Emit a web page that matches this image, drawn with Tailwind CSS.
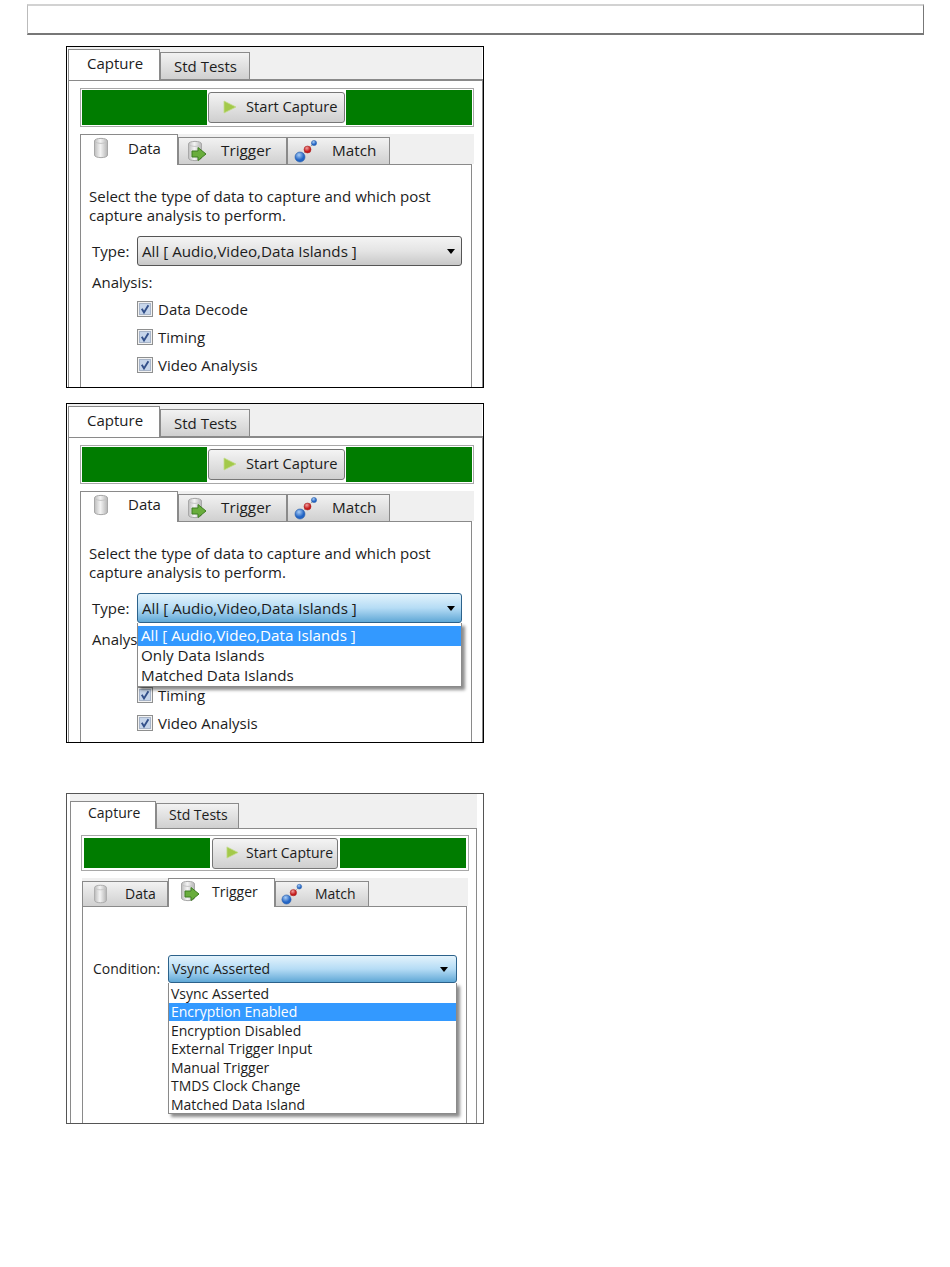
<!DOCTYPE html>
<html lang="en">
<head>
  <meta charset="UTF-8">
  <title>Capture settings</title>
  <script src="https://cdn.jsdelivr.net/npm/@tailwindcss/browser@4"></script>
</head>
<body class="bg-white text-[#1c1c1c] font-['Open_Sans',sans-serif] text-[14px] leading-[19px]">

  <!-- icon set, reused in all three panels -->
  <svg class="absolute w-0 h-0">
    <defs>
      <linearGradient id="can" x1="0" x2="1" y1="0" y2="0">
        <stop offset="0" stop-color="#bdbdbd"/><stop offset="0.45" stop-color="#f4f4f4"/><stop offset="1" stop-color="#b5b5b5"/>
      </linearGradient>
      <radialGradient id="blueball" cx="0.4" cy="0.3"><stop offset="0" stop-color="#a9cdf5"/><stop offset="1" stop-color="#2264c4"/></radialGradient>
      <radialGradient id="redball" cx="0.4" cy="0.3"><stop offset="0" stop-color="#f2a0a0"/><stop offset="1" stop-color="#c41c1c"/></radialGradient>
    </defs>
    <symbol id="i-play" viewBox="0 0 14 14"><path d="M1 1 L13 7 L1 13 Z" fill="#a3c94a" stroke="#c3dc8c" stroke-width="0.8"/></symbol>
    <symbol id="i-data" viewBox="0 0 16 22">
      <path d="M1.5 4 C1.5 0.5 14.5 0.5 14.5 4 V18 C14.5 21.5 1.5 21.5 1.5 18 Z" fill="url(#can)" stroke="#a8a8a8"/>
      <path d="M2 4.5 C4 7 12 7 14 4.5" fill="none" stroke="#c4c4c4"/>
    </symbol>
    <symbol id="i-trigger" viewBox="0 0 20 22">
      <path d="M1.5 4 C1.5 0.5 14.5 0.5 14.5 4 V18 C14.5 21.5 1.5 21.5 1.5 18 Z" fill="url(#can)" stroke="#a8a8a8"/>
      <path d="M2 4.5 C4 7 12 7 14 4.5" fill="none" stroke="#c4c4c4"/>
      <path d="M5 11 H11 V7.5 L19 14 L11 20.5 V17 H5 Z" fill="#69ad3c" stroke="#3f7d22" stroke-width="1"/>
    </symbol>
    <symbol id="i-match" viewBox="0 0 24 24">
      <path d="M6 18 L20 4" stroke="#9a9a9a" stroke-width="1" stroke-dasharray="2 1"/>
      <circle cx="6" cy="18" r="5" fill="url(#blueball)" stroke="#2a5ea8" stroke-width="0.6"/>
      <circle cx="13.5" cy="10.5" r="3.5" fill="url(#redball)" stroke="#a01818" stroke-width="0.5"/>
      <circle cx="20" cy="4" r="2.6" fill="url(#blueball)" stroke="#2a5ea8" stroke-width="0.5"/>
    </symbol>
    <symbol id="i-check" viewBox="0 0 16 16">
      <rect x="0.5" y="0.5" width="15" height="15" fill="#f2f2f2" stroke="#8e8f8f"/>
      <rect x="2.5" y="2.5" width="11" height="11" fill="#c6d5ea" stroke="#a7b4c8"/>
      <path d="M4.8 7.8 L7 11.4 L11.4 4.2" fill="none" stroke="#33508a" stroke-width="1.9"/>
    </symbol>
  </svg>

  <!-- top bar -->
  <div class="h-[4px]"></div>
  <div class="ml-[27px] w-[897px] h-[31px] border-t-2 border-t-[#d2d2d2] border-l border-l-[#bbbbbb] border-r border-r-[#777777] border-b-2 border-b-[#777777]"></div>
  <div class="h-[11px]"></div>

  <!-- Panel 1: data tab -->
  <section class="ml-[66px] w-[418px] h-[342px] border border-black overflow-hidden">
    <div class="flex h-[32px] items-end bg-[#f0f0f0] mx-[1px]">
      <div class="relative z-10 -mb-px w-[92px] h-[31px] bg-white border border-b-0 border-[#8a8a8a] pl-[18px] pt-[4px] text-[15px]">Capture</div>
      <div class="w-[90px] h-[27px] bg-gradient-to-b from-[#f2f2f2] to-[#d0d0d0] border border-b-0 border-[#8a8a8a] pl-[13px] pt-[4px] text-[15px]">Std Tests</div>
    </div>
    <div class="ml-[1px] h-full border-t-2 border-l border-r border-[#8a8a8a] pl-[11px]">
      <div class="mt-[7px] w-[394px] h-[39px] border border-[#a8a8a8] p-[1px] flex gap-[1px]">
        <div class="w-[125px] bg-[#007c00]"></div>
        <button class="w-[137px] mt-[2px] h-[31px] rounded-[3px] border border-[#777777] bg-gradient-to-b from-[#f4f4f4] to-[#cfcfcf] flex items-center pl-[14px] pb-[2px] gap-[9px] text-[14.7px]">
          <svg class="w-[14px] h-[14px]"><use href="#i-play"/></svg>Start Capture
        </button>
        <div class="flex-1 bg-[#007c00]"></div>
      </div>
      <div class="mt-[7px] w-[394px] h-[30px] bg-[#f0f0f0] flex items-end">
        <div class="relative z-10 -mb-px w-[98px] h-[31px] bg-white border border-b-0 border-[#8a8a8a] flex gap-[19px] pl-[12px] text-[15px]">
          <svg class="w-[16px] h-[22px] mt-[2px]"><use href="#i-data"/></svg><span class="pt-[4px]">Data</span>
        </div>
        <div class="w-[109px] h-[27px] bg-gradient-to-b from-[#f2f2f2] to-[#d0d0d0] border border-b-0 border-[#8a8a8a] flex gap-[14px] pl-[8px] text-[15.3px]">
          <svg class="w-[20px] h-[22px] mt-[2px]"><use href="#i-trigger"/></svg><span class="pt-[3px]">Trigger</span>
        </div>
        <div class="w-[103px] h-[27px] bg-gradient-to-b from-[#f2f2f2] to-[#d0d0d0] border border-b-0 border-[#8a8a8a] flex gap-[14px] pl-[6px] text-[15.3px]">
          <svg class="w-[24px] h-[24px] mt-[1px]"><use href="#i-match"/></svg><span class="pt-[3px]">Match</span>
        </div>
      </div>
      <div class="w-[392px] h-[240px] border border-[#8a8a8a] pl-[8px] pt-[22px] text-[15px]">
        <p class="w-[375px]">Select the type of data to capture and which post capture analysis to perform.</p>
        <div class="flex items-center mt-[11px] ml-[3px]">
          <span class="w-[45px]">Type:</span>
          <div class="w-[325px] h-[30px] rounded-[3px] border border-[#555555] bg-gradient-to-b from-[#f4f4f4] via-[#e4e4e4] to-[#c8c8c8] flex items-center justify-between pl-[4px] pr-[6px] text-[15.2px]">
            All [ Audio,Video,Data Islands ]
            <span class="w-0 h-0 border-x-[4px] border-x-transparent border-t-[5px] border-t-black"></span>
          </div>
        </div>
        <p class="ml-[3px] mt-[7px]">Analysis:</p>
        <div class="ml-[48px] mt-[9px] flex flex-col gap-[12px]">
          <label class="flex items-center gap-[5px] h-[16px]"><svg class="w-[16px] h-[16px]"><use href="#i-check"/></svg>Data Decode</label>
          <label class="flex items-center gap-[5px] h-[16px]"><svg class="w-[16px] h-[16px]"><use href="#i-check"/></svg>Timing</label>
          <label class="flex items-center gap-[5px] h-[16px]"><svg class="w-[16px] h-[16px]"><use href="#i-check"/></svg>Video Analysis</label>
        </div>
      </div>
    </div>
  </section>

  <div class="h-[15px]"></div>

  <!-- Panel 2: type dropdown open -->
  <section class="ml-[66px] w-[418px] h-[340px] border border-black overflow-hidden">
    <div class="flex h-[32px] items-end bg-[#f0f0f0] mx-[1px]">
      <div class="relative z-10 -mb-px w-[92px] h-[31px] bg-white border border-b-0 border-[#8a8a8a] pl-[18px] pt-[4px] text-[15px]">Capture</div>
      <div class="w-[90px] h-[27px] bg-gradient-to-b from-[#f2f2f2] to-[#d0d0d0] border border-b-0 border-[#8a8a8a] pl-[13px] pt-[4px] text-[15px]">Std Tests</div>
    </div>
    <div class="ml-[1px] h-full border-t-2 border-l border-r border-[#8a8a8a] pl-[11px]">
      <div class="mt-[7px] w-[394px] h-[39px] border border-[#a8a8a8] p-[1px] flex gap-[1px]">
        <div class="w-[125px] bg-[#007c00]"></div>
        <button class="w-[137px] mt-[2px] h-[31px] rounded-[3px] border border-[#777777] bg-gradient-to-b from-[#f4f4f4] to-[#cfcfcf] flex items-center pl-[14px] pb-[2px] gap-[9px] text-[14.7px]">
          <svg class="w-[14px] h-[14px]"><use href="#i-play"/></svg>Start Capture
        </button>
        <div class="flex-1 bg-[#007c00]"></div>
      </div>
      <div class="mt-[7px] w-[394px] h-[30px] bg-[#f0f0f0] flex items-end">
        <div class="relative z-10 -mb-px w-[98px] h-[31px] bg-white border border-b-0 border-[#8a8a8a] flex gap-[19px] pl-[12px] text-[15px]">
          <svg class="w-[16px] h-[22px] mt-[2px]"><use href="#i-data"/></svg><span class="pt-[3px]">Data</span>
        </div>
        <div class="w-[109px] h-[27px] bg-gradient-to-b from-[#f2f2f2] to-[#d0d0d0] border border-b-0 border-[#8a8a8a] flex gap-[14px] pl-[8px] text-[15.3px]">
          <svg class="w-[20px] h-[22px] mt-[2px]"><use href="#i-trigger"/></svg><span class="pt-[3px]">Trigger</span>
        </div>
        <div class="w-[103px] h-[27px] bg-gradient-to-b from-[#f2f2f2] to-[#d0d0d0] border border-b-0 border-[#8a8a8a] flex gap-[14px] pl-[6px] text-[15.3px]">
          <svg class="w-[24px] h-[24px] mt-[1px]"><use href="#i-match"/></svg><span class="pt-[3px]">Match</span>
        </div>
      </div>
      <div class="w-[392px] h-[240px] border border-[#8a8a8a] pl-[8px] pt-[22px] text-[15px]">
        <p class="w-[375px]">Select the type of data to capture and which post capture analysis to perform.</p>
        <div class="relative flex items-center mt-[11px] ml-[3px]">
          <span class="w-[45px]">Type:</span>
          <div class="w-[325px] h-[30px] rounded-[3px] border border-[#2c628b] bg-gradient-to-b from-[#e3f3fc] via-[#b5dcf5] to-[#5fa8d6] flex items-center justify-between pl-[4px] pr-[6px] text-[15.2px]">
            All [ Audio,Video,Data Islands ]
            <span class="w-0 h-0 border-x-[4px] border-x-transparent border-t-[5px] border-t-black"></span>
          </div>
          <!-- dropdown list -->
          <ul class="absolute z-20 left-[45px] top-[30px] w-[325px] h-[64px] bg-white border-x border-b border-[#8a8a8a] pt-[3px] shadow-[3px_3px_3px_rgba(0,0,0,0.45)] text-[15.2px]">
            <li class="h-[20px] bg-[#3399ff] text-white pl-[3px]">All [ Audio,Video,Data Islands ]</li>
            <li class="h-[20px] pl-[3px]">Only Data Islands</li>
            <li class="h-[20px] pl-[3px]">Matched Data Islands</li>
          </ul>
        </div>
        <p class="ml-[3px] mt-[7px]">Analysis:</p>
        <!-- Data Decode row sits behind the open list -->
        <div class="ml-[48px] mt-[10px] flex flex-col gap-[12px]">
          <div class="h-[16px]"></div>
          <label class="flex items-center gap-[5px] h-[16px]"><svg class="w-[16px] h-[16px]"><use href="#i-check"/></svg>Timing</label>
          <label class="flex items-center gap-[5px] h-[16px]"><svg class="w-[16px] h-[16px]"><use href="#i-check"/></svg>Video Analysis</label>
        </div>
      </div>
    </div>
  </section>

  <div class="h-[50px]"></div>

  <!-- Panel 3: trigger tab -->
  <section class="ml-[66px] w-[418px] h-[331px] border border-[#555555] overflow-hidden">
    <div class="flex h-[34px] items-end bg-[#f0f0f0] ml-[3px] mr-[6px] pt-[7px]">
      <div class="relative z-10 -mb-px w-[86px] h-[28px] bg-white border border-b-0 border-[#8a8a8a] pl-[17px] pt-[1px]">Capture</div>
      <div class="w-[83px] h-[25px] bg-gradient-to-b from-[#f2f2f2] to-[#d0d0d0] border border-b-0 border-[#8a8a8a] pl-[12px] pt-[1px]">Std Tests</div>
    </div>
    <div class="ml-[3px] mr-[6px] h-full border-t border-l border-r border-[#8a8a8a] pl-[10px]">
      <div class="mt-[6px] w-[388px] h-[36px] border border-[#a8a8a8] p-[2px] flex gap-[2px]">
        <div class="w-[126px] bg-[#007c00]"></div>
        <button class="w-[126px] h-[31px] rounded-[3px] border border-[#777777] bg-gradient-to-b from-[#f4f4f4] to-[#cfcfcf] flex items-center pl-[13px] pb-[2px] gap-[7px]">
          <svg class="w-[13px] h-[13px]"><use href="#i-play"/></svg>Start Capture
        </button>
        <div class="flex-1 bg-[#007c00]"></div>
      </div>
      <div class="mt-[7px] ml-[1px] w-[386px] h-[28px] bg-[#f0f0f0] flex items-end">
        <div class="w-[86px] h-[25px] bg-gradient-to-b from-[#f2f2f2] to-[#d0d0d0] border border-b-0 border-[#8a8a8a] flex gap-[17px] pl-[10px]">
          <svg class="w-[15px] h-[20px] mt-[2px]"><use href="#i-data"/></svg><span class="pt-[2px]">Data</span>
        </div>
        <div class="relative z-10 -mb-px w-[107px] h-[29px] bg-white border border-b-0 border-[#8a8a8a] flex gap-[12px] pl-[11px]">
          <svg class="w-[20px] h-[22px] mt-[1px]"><use href="#i-trigger"/></svg><span class="pt-[3px]">Trigger</span>
        </div>
        <div class="w-[94px] h-[25px] bg-gradient-to-b from-[#f2f2f2] to-[#d0d0d0] border border-b-0 border-[#8a8a8a] flex gap-[12px] pl-[5px]">
          <svg class="w-[22px] h-[22px] mt-[1px]"><use href="#i-match"/></svg><span class="pt-[2px]">Match</span>
        </div>
      </div>
      <div class="ml-[1px] w-[385px] h-[240px] border border-[#8a8a8a] pl-[10px] pt-[48px]">
        <div class="relative flex items-center">
          <span class="w-[75px] -mt-[2px]">Condition:</span>
          <div class="w-[289px] h-[28px] rounded-[3px] border border-[#2c628b] bg-gradient-to-b from-[#e3f3fc] via-[#b5dcf5] to-[#5fa8d6] flex items-center justify-between pl-[3px] pr-[8px]">
            <span class="-mt-[2px]">Vsync Asserted</span>
            <span class="w-0 h-0 border-x-[4px] border-x-transparent border-t-[5px] border-t-black"></span>
          </div>
          <!-- dropdown list -->
          <ul class="absolute z-20 left-[75px] top-[28px] w-[289px] h-[131px] bg-white border-x border-b border-[#8a8a8a] pt-[2px] shadow-[3px_3px_3px_rgba(0,0,0,0.45)] leading-[18.5px]">
            <li class="h-[18px] pl-[2px]">Vsync Asserted</li>
            <li class="h-[18px] bg-[#3399ff] text-white pl-[2px]">Encryption Enabled</li>
            <li class="h-[19px] pt-[1px] pl-[2px]">Encryption Disabled</li>
            <li class="h-[19px] pl-[2px]">External Trigger Input</li>
            <li class="h-[18px] pl-[2px]">Manual Trigger</li>
            <li class="h-[19px] pl-[2px]">TMDS Clock Change</li>
            <li class="h-[18px] pl-[2px]">Matched Data Island</li>
          </ul>
        </div>
      </div>
    </div>
  </section>
</body>
</html>
